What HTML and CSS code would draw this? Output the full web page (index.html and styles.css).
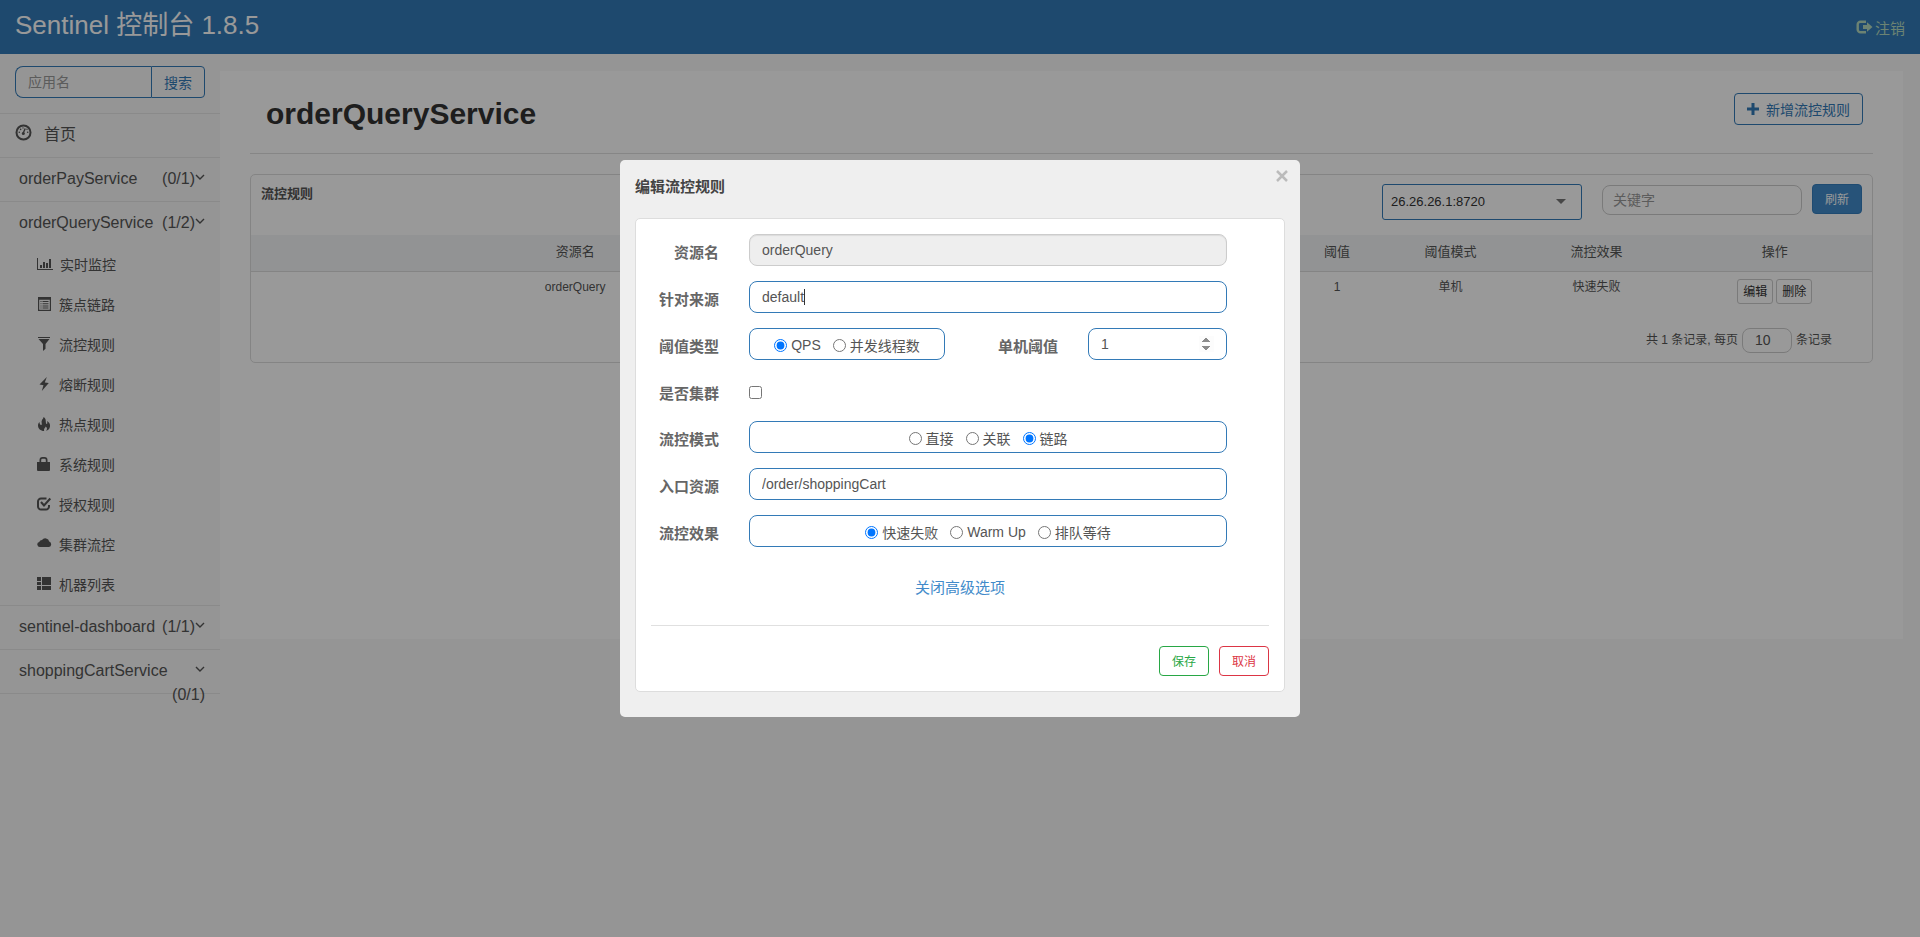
FILE: index.html
```html
<!DOCTYPE html>
<html lang="zh-CN">
<head>
    <meta charset="UTF-8">
    <meta name="viewport" content="width=device-width, initial-scale=1.0">
    <title>Sentinel 控制台</title>
    <link rel="stylesheet" href="styles.css">
</head>
<body>
    <header class="navbar">
        <a class="brand" href="#">Sentinel 控制台 1.8.5</a>
        <a class="logout" href="#">
            <svg width="17" height="14" viewBox="0 0 17 14"><path d="M10 1.700H4.500a2.800 2.800 0 0 0-2.800 2.800v5a2.800 2.800 0 0 0 2.800 2.800H10" fill="none" stroke="currentColor" stroke-width="2.400"/><path d="M7 5h4V2.200L16.500 7 11 11.800V9H7z" fill="currentColor"/></svg>
            注销
        </a>
    </header>

    <div class="layout">
        <nav class="sidebar">
            <form class="search">
                <input type="text" placeholder="应用名" aria-label="应用名">
                <button type="button">搜索</button>
            </form>
            <ul class="menu">
                <li>
                    <a class="home" href="#">
                        <svg width="17" height="17" viewBox="0 0 17 17"><circle cx="8.5" cy="8.5" r="7" fill="none" stroke="currentColor" stroke-width="2"/><path d="M8 9.5l2.2-5" stroke="currentColor" stroke-width="1.4"/><g fill="currentColor"><circle cx="8.3" cy="9.4" r="1.5"/><circle cx="4.3" cy="8.3" r=".8"/><circle cx="5.6" cy="5.4" r=".8"/><circle cx="12.7" cy="8.3" r=".8"/><circle cx="8" cy="3.9" r=".7"/><circle cx="12" cy="5.3" r=".7"/></g></svg>
                        首页
                    </a>
                </li>
                <li><a class="app" href="#">orderPayService<svg class="arrow" viewBox="0 0 10 7"><path d="M1 1l4 4 4-4"/></svg><span class="count">(0/1)</span></a></li>
                <li>
                    <a class="app" href="#">orderQueryService<svg class="arrow" viewBox="0 0 10 7"><path d="M1 1l4 4 4-4"/></svg><span class="count">(1/2)</span></a>
                    <ul class="submenu">
                        <li><a href="#"><svg width="16" height="14" viewBox="0 0 16 14"><path d="M0 1h1v11h15v1H0zM3 8h2v3H3zM6 5h2v6H6zM9 6h2v5H9zM12 2h2v9h-2z"/></svg>实时监控</a></li>
                        <li><a href="#"><svg width="15" height="14" viewBox="0 0 15 14"><path fill-rule="evenodd" d="M1 0h13v14H1zM2.2 2.8v10h10.6v-10zM3.5 4h1v1h-1zM5.5 4h6v1h-6zM3.5 6.2h1v1h-1zM5.5 6.2h6v1h-6zM3.5 8.4h1v1h-1zM5.5 8.4h6v1h-6zM3.5 10.6h1v1h-1zM5.5 10.6h6v1h-6z"/></svg>簇点链路</a></li>
                        <li><a href="#"><svg width="15" height="14" viewBox="0 0 15 14"><path d="M1 0h12v1H1zM1.5 2h11L8.5 7v4.8L6 14V7z"/></svg>流控规则</a></li>
                        <li><a href="#"><svg width="15" height="14" viewBox="0 0 15 14"><path d="M9.8 0L2.5 7.6l4 .7L4.8 14l7-8-4-.6z"/></svg>熔断规则</a></li>
                        <li><a href="#"><svg width="15" height="14" viewBox="0 0 15 14"><path d="M6.5 0C10 2 8 5 9.500 7c1 .4 1-1.600.5-3C12 5 13.500 7 13 9.500c-.4 2.500-2 4-4 4.300C10.800 12 10 10.500 8.500 9.500 8.600 11 6.500 11 7.200 14 3.500 14 1 11.500 1 8.500 1 7 1.600 5.800 2.500 5c0 2 1 3.400 2 3C5.500 7 3.800 5 5 3 5.500 2 6.500 1.500 6.500 0z"/></svg>热点规则</a></li>
                        <li><a href="#"><svg width="15" height="14" viewBox="0 0 15 14"><path fill-rule="evenodd" d="M0 5h2.500V3a3 3 0 0 1 3-3h2a3 3 0 0 1 3 3v2H13v8a1 1 0 0 1-1 1H1a1 1 0 0 1-1-1zM4.200 5h4.600V3a1.200 1.200 0 0 0-1.200-1.200H5.400A1.200 1.200 0 0 0 4.200 3z"/></svg>系统规则</a></li>
                        <li><a href="#"><svg width="15" height="14" viewBox="0 0 15 14"><path d="M9.500 1.500H4A3 3 0 0 0 1 4.500v5a3 3 0 0 0 3 3h5a3 3 0 0 0 3-3V8M4 5l3 3.500L13.300 1.500" fill="none" stroke="currentColor" stroke-width="2"/></svg>授权规则</a></li>
                        <li><a href="#"><svg width="15" height="14" viewBox="0 0 15 14"><path d="M3 10a2.600 2.600 0 0 1-.8-5.100A3.200 3.200 0 0 1 5 3a4 4 0 0 1 7.200 1.600A2.800 2.800 0 0 1 12 10z"/></svg>集群流控</a></li>
                        <li><a href="#"><svg width="15" height="14" viewBox="0 0 15 14"><path d="M0 0h4v4H0zM5 0h9v8H5zM0 5h4v3H0zM0 9h4v4H0zM5 9h9v4H5z"/></svg>机器列表</a></li>
                    </ul>
                </li>
                <li><a class="app" href="#">sentinel-dashboard<svg class="arrow" viewBox="0 0 10 7"><path d="M1 1l4 4 4-4"/></svg><span class="count">(1/1)</span></a></li>
                <li><a class="app" href="#">shoppingCartService<svg class="arrow" viewBox="0 0 10 7"><path d="M1 1l4 4 4-4"/></svg><span class="count">(0/1)</span></a></li>
            </ul>
        </nav>

        <main class="content">
            <div class="page-head">
                <h1>orderQueryService</h1>
                <button type="button" class="btn-add">
                    <svg width="12" height="12" viewBox="0 0 12 12"><path d="M4.500 0h3v4.500H12v3H7.500V12h-3V7.500H0v-3h4.500z" fill="currentColor"/></svg>
                    新增流控规则
                </button>
            </div>
            <section class="card">
                <div class="card-head">
                    <strong>流控规则</strong>
                    <div class="machine">
                        <select aria-label="机器">
                            <option>26.26.26.1:8720</option>
                        </select>
                    </div>
                    <input class="keyword" type="text" placeholder="关键字" aria-label="关键字">
                    <button type="button" class="btn-refresh">刷新</button>
                </div>
                <table>
                    <colgroup>
                        <col class="col-name"><col class="col-md"><col class="col-md"><col class="col-md"><col class="col-sm"><col class="col-md"><col class="col-lg"><col class="col-act">
                    </colgroup>
                    <thead>
                        <tr><th>资源名</th><th></th><th></th><th></th><th>阈值</th><th>阈值模式</th><th>流控效果</th><th>操作</th></tr>
                    </thead>
                    <tbody>
                        <tr>
                            <td>orderQuery</td><td></td><td></td><td></td><td>1</td><td>单机</td><td>快速失败</td>
                            <td><div class="actions"><button type="button">编辑</button><button type="button">删除</button></div></td>
                        </tr>
                    </tbody>
                </table>
                <div class="card-foot">
                    <label for="page-size">共 1 条记录, 每页</label>
                    <input id="page-size" type="text" value="10">
                    <span>条记录</span>
                </div>
            </section>
        </main>
    </div>

    <div class="overlay">
        <div class="dialog" role="dialog" aria-labelledby="dialog-title">
            <button type="button" class="close" aria-label="关闭">
                <svg width="12" height="12" viewBox="0 0 12 12"><path d="M1 1l10 10M11 1L1 11" stroke="currentColor" stroke-width="2.500"/></svg>
            </button>
            <h2 id="dialog-title">编辑流控规则</h2>
            <form class="panel">
                <div class="row">
                    <label class="name" for="resource">资源名</label>
                    <input class="field" id="resource" type="text" value="orderQuery" disabled>
                </div>
                <div class="row">
                    <label class="name" for="limit-app">针对来源</label>
                    <div class="editing"><input class="field" id="limit-app" type="text" value="default"></div>
                </div>
                <div class="row">
                    <span class="name">阈值类型</span>
                    <div class="field choices grade">
                        <label><input type="radio" name="grade" checked>QPS</label>
                        <label><input type="radio" name="grade">并发线程数</label>
                    </div>
                    <label class="name count-name" for="threshold">单机阈值</label>
                    <input class="field threshold" id="threshold" type="number" value="1">
                </div>
                <div class="row row-check">
                    <label class="name" for="cluster">是否集群</label>
                    <input id="cluster" type="checkbox">
                </div>
                <div class="row">
                    <span class="name">流控模式</span>
                    <div class="field choices">
                        <label><input type="radio" name="strategy">直接</label>
                        <label><input type="radio" name="strategy">关联</label>
                        <label><input type="radio" name="strategy" checked>链路</label>
                    </div>
                </div>
                <div class="row">
                    <label class="name" for="entry">入口资源</label>
                    <input class="field" id="entry" type="text" value="/order/shoppingCart">
                </div>
                <div class="row">
                    <span class="name">流控效果</span>
                    <div class="field choices">
                        <label><input type="radio" name="behavior" checked>快速失败</label>
                        <label><input type="radio" name="behavior">Warm Up</label>
                        <label><input type="radio" name="behavior">排队等待</label>
                    </div>
                </div>
                <a class="toggle" href="#">关闭高级选项</a>
                <div class="panel-foot">
                    <button type="button" class="btn-save">保存</button>
                    <button type="button" class="btn-cancel">取消</button>
                </div>
            </form>
        </div>
    </div>
</body>
</html>
```

FILE: styles.css
```css
* {
    box-sizing: border-box;
}
body {
    margin: 0;
    min-height: 100vh;
    background: #f8f8f8;
    color: #555;
    font-family: "Liberation Sans", "Noto Sans CJK SC", sans-serif;
    font-size: 14px;
}
a {
    color: inherit;
    text-decoration: none;
}
ul {
    list-style: none;
    margin: 0;
    padding: 0;
}
input, select, button {
    font-family: inherit;
    font-size: 14px;
    color: #555;
}
button {
    cursor: pointer;
    background: transparent;
    border: 1px solid #337ab7;
    border-radius: 4px;
    padding: 0 0 2px;
}
::placeholder {
    color: #999;
}

/* top bar */
.navbar {
    display: flex;
    justify-content: space-between;
    height: 54px;
    padding: 0 15px;
    background: #337ab7;
}
.brand {
    color: #fff;
    font-size: 26px;
    line-height: 50px;
}
.logout {
    display: flex;
    align-items: center;
    gap: 2px;
    color: #b4dbc0;
    font-size: 15px;
}

/* sidebar */
.layout {
    display: flex;
    align-items: flex-start;
}
.sidebar {
    flex: none;
    width: 220px;
}
.search {
    display: flex;
    height: 59px;
    padding: 12px 15px 15px;
}
.search input {
    flex: 1;
    min-width: 0;
    padding: 0 12px;
    background: transparent;
    border: 1px solid #337ab7;
    border-right: 0;
    border-radius: 8px 0 0 8px;
}
.search button {
    width: 54px;
    padding: 0;
    border-radius: 0 4px 4px 0;
    color: #337ab7;
}
.menu {
    border-top: 1px solid #e7e7e7;
}
.menu > li {
    border-bottom: 1px solid #e7e7e7;
    font-size: 16px;
}
.home {
    display: flex;
    align-items: center;
    gap: 12px;
    height: 43px;
    padding: 0 15px 6px;
}
.app {
    display: block;
    height: 43px;
    padding: 9px 15px 0 19px;
    line-height: 24px;
}
.arrow {
    float: right;
    width: 10px;
    height: 7px;
    margin-top: 7px;
    fill: none;
    stroke: currentColor;
    stroke-width: 1.4;
}
.count {
    float: right;
}
.submenu a {
    display: flex;
    align-items: center;
    gap: 7px;
    height: 40px;
    padding: 0 0 2px 37px;
    font-size: 14px;
}
.submenu svg {
    fill: currentColor;
}
.sidebar svg {
    color: #555;
}

/* main area */
.content {
    flex: 1;
    min-width: 0;
    min-height: 568px;
    margin: 17px 17px 0 0;
    padding: 0 30px;
    background: #fff;
}
.page-head {
    display: flex;
    justify-content: space-between;
    align-items: center;
    height: 83px;
    padding: 0 10px 7px 16px;
    border-bottom: 1px solid #e0e0e0;
}
h1 {
    margin: 0;
    padding-top: 10px;
    color: #333;
    font-size: 30px;
}
.btn-add {
    display: flex;
    align-items: center;
    justify-content: center;
    gap: 7px;
    width: 129px;
    height: 32px;
    padding: 0;
    color: #337ab7;
}
.card {
    margin-top: 20px;
    border: 1px solid #ddd;
    border-radius: 5px;
}
.card-head {
    display: flex;
    align-items: flex-start;
    height: 60px;
    padding: 9px 10px 0;
}
.card-head strong {
    flex: 1;
    font-size: 13px;
    line-height: 20px;
}
.machine {
    position: relative;
    width: 200px;
    margin-right: 20px;
}
.machine::after {
    content: "";
    position: absolute;
    top: 15px;
    right: 16px;
    border: 5px solid transparent;
    border-top-color: #777;
    border-bottom: 0;
}
.machine select {
    width: 100%;
    height: 36px;
    padding: 0 8px 2px;
    appearance: none;
    background: transparent;
    border: 1px solid #337ab7;
    border-radius: 3px;
    color: #333;
    font-size: 13px;
}
.keyword {
    width: 200px;
    height: 30px;
    margin-top: 1px;
    margin-right: 10px;
    padding: 0 10px;
    border: 1px solid #ccc;
    border-radius: 8px;
    font-size: 14px;
}
.btn-refresh {
    width: 50px;
    height: 30px;
    background: #428bca;
    border-color: #357ebd;
    color: #fff;
    font-size: 12px;
}
table {
    width: 100%;
    border-collapse: collapse;
    table-layout: fixed;
}
.col-name {
    width: 40%;
}
.col-sm {
    width: 6%;
}
.col-md {
    width: 8%;
}
.col-lg {
    width: 10%;
}
.col-act {
    width: 12%;
}
th {
    height: 36px;
    padding: 0 0 4px;
    background: #f3f5f7;
    border-bottom: 1px solid #ddd;
    font-size: 13px;
    font-weight: normal;
}
td {
    padding: 6px 0 8px;
    font-size: 12px;
    line-height: 18px;
    text-align: center;
    vertical-align: top;
}
.actions {
    display: flex;
    justify-content: center;
    gap: 3px;
    padding-top: 1px;
}
.actions button {
    width: 36px;
    height: 25px;
    border-color: #ccc;
    border-radius: 3px;
    color: #333;
    font-size: 12px;
}
.card-foot {
    display: flex;
    align-items: center;
    justify-content: flex-end;
    gap: 4px;
    padding: 16px 40px 9px 0;
    font-size: 12px;
}
.card-foot label, .card-foot span {
    padding-bottom: 3px;
}
.card-foot input {
    width: 50px;
    height: 25px;
    padding: 0 12px;
    border: 1px solid #ccc;
    border-radius: 8px;
}

/* edit dialog */
.overlay {
    position: fixed;
    inset: 0;
    padding-top: 160px;
    background: rgba(0, 0, 0, 0.4);
}
.dialog {
    position: relative;
    width: 680px;
    margin: 0 auto;
    padding: 0 15px 25px;
    background: #efefef;
    border-radius: 5px;
}
.close {
    position: absolute;
    top: 10px;
    right: 12px;
    padding: 0;
    border: 0;
    color: #bbb;
    line-height: 0;
}
.dialog h2 {
    margin: 0;
    height: 58px;
    line-height: 54px;
    color: #444;
    font-size: 15px;
}
.panel {
    padding: 15px;
    background: #fff;
    border: 1px solid #ddd;
    border-radius: 5px;
}
.row {
    display: flex;
    align-items: center;
    height: 32px;
    margin-bottom: 15px;
    padding-right: 42px;
}
.row-check {
    margin-bottom: 14px;
}
.name {
    width: 68px;
    margin-right: 30px;
    padding-top: 2px;
    color: #666;
    font-size: 15px;
    font-weight: bold;
    text-align: right;
}
.field {
    flex: 1;
    min-width: 0;
    width: 100%;
    height: 32px;
    padding: 0 12px;
    background: #fff;
    border: 1px solid #337ab7;
    border-radius: 8px;
}
.field:disabled {
    background: #eee;
    border-color: #ccc;
    box-shadow: inset 0 1px 1px rgba(0, 0, 0, 0.08);
}
.editing {
    position: relative;
    flex: 1;
}
.editing::after {
    content: "";
    position: absolute;
    left: 55px;
    top: 8px;
    width: 1px;
    height: 16px;
    background: #333;
}
.choices {
    display: flex;
    align-items: center;
    justify-content: center;
    gap: 12px;
}
.choices label {
    display: flex;
    align-items: center;
    gap: 4px;
    padding-top: 2px;
}
input[type="radio"], input[type="checkbox"] {
    margin: 0;
}
.row-check input {
    margin-top: 3px;
}
.grade {
    flex: none;
    width: 196px;
}
.count-name {
    flex: 1;
}
.threshold {
    flex: none;
    width: 139px;
}
.threshold::-webkit-inner-spin-button {
    opacity: 1;
}
.toggle {
    display: block;
    margin: 30px 0 26px;
    color: #428bca;
    font-size: 15px;
    line-height: 22px;
    text-align: center;
}
.panel-foot {
    display: flex;
    justify-content: flex-end;
    gap: 10px;
    padding-top: 20px;
    border-top: 1px solid #e0e0e0;
}
.panel-foot button {
    width: 50px;
    height: 30px;
    font-size: 12px;
}
.panel-foot .btn-save {
    border-color: #28a745;
    color: #28a745;
}
.panel-foot .btn-cancel {
    border-color: #dc3545;
    color: #dc3545;
}
```
